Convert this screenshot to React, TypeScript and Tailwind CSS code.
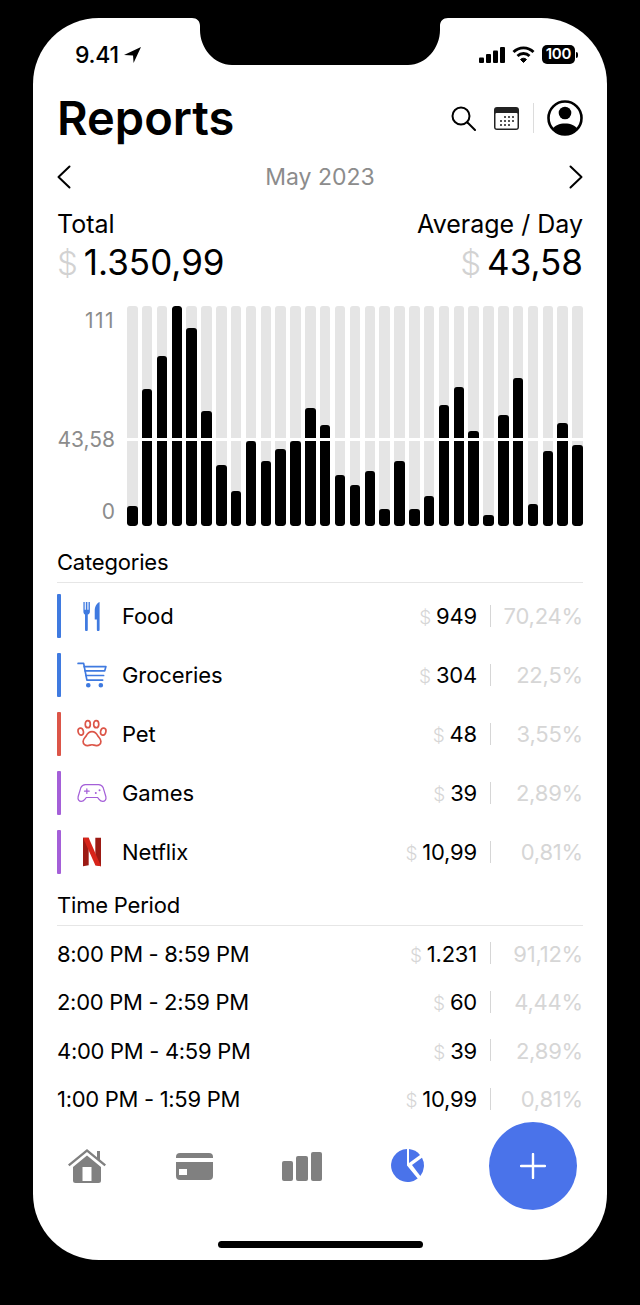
const bars = [20, 137, 170, 220, 198, 115, 61, 35, 85, 65, 77, 85, 118, 101, 51, 41, 55, 17, 65, 17, 30, 121, 139, 95, 11, 111, 148, 22, 75, 103, 81];

const categories = [
  { name: "Food", amount: "949", pct: "70,24%", color: "bg-[#3f7ae0]", icon: <FoodIcon /> },
  { name: "Groceries", amount: "304", pct: "22,5%", color: "bg-[#3f7ae0]", icon: <CartIcon /> },
  { name: "Pet", amount: "48", pct: "3,55%", color: "bg-[#dc5548]", icon: <PawIcon /> },
  { name: "Games", amount: "39", pct: "2,89%", color: "bg-[#a45fd8]", icon: <GameIcon /> },
  { name: "Netflix", amount: "10,99", pct: "0,81%", color: "bg-[#a45fd8]", icon: <NetflixIcon /> },
];

const periods = [
  { name: "8:00 PM - 8:59 PM", amount: "1.231", pct: "91,12%" },
  { name: "2:00 PM - 2:59 PM", amount: "60", pct: "4,44%" },
  { name: "4:00 PM - 4:59 PM", amount: "39", pct: "2,89%" },
  { name: "1:00 PM - 1:59 PM", amount: "10,99", pct: "0,81%" },
];

function FoodIcon() {
  return (
    <svg width="17" height="30" viewBox="0 0 21 31" preserveAspectRatio="none" className="text-[#3f7ae0]" fill="currentColor">
      <path d="M0.5 1h1.600v8h1.400V1h1.900v8h1.400V1h1.700v10c0 1.500-1 2.600-2.600 3v15.500a1.700 1.700 0 0 1-3.400 0V14C1.400 13.600.5 12.500.5 11z" />
      <path d="M20.500 1v28.500a1.700 1.700 0 0 1-3.400 0V19h-2.600V10c0-4 2.400-8 6-9z" />
    </svg>
  );
}

function CartIcon() {
  return (
    <svg width="30" height="26" viewBox="0 0 32 28" fill="none" stroke="#3f7ae0" strokeWidth="1.800" strokeLinecap="round" strokeLinejoin="round">
      <path d="M1 1.500h6l3.500 18h17" />
      <path d="M7.600 5h23.400l-1.300 4.500H8.500" />
      <path d="M9.500 14.500h19" />
      <circle cx="12" cy="25" r="1.600" fill="#3f7ae0" />
      <circle cx="25.500" cy="25" r="1.600" fill="#3f7ae0" />
    </svg>
  );
}

function PawIcon() {
  return (
    <svg width="30" height="29" viewBox="0 0 32 30" fill="none" stroke="#dc5548" strokeWidth="1.800">
      <ellipse cx="11.500" cy="5" rx="2.700" ry="3.800" />
      <ellipse cx="20.500" cy="5" rx="2.700" ry="3.800" />
      <ellipse cx="4" cy="13" rx="2.800" ry="3.800" transform="rotate(-12 4 13)" />
      <ellipse cx="28" cy="13" rx="2.800" ry="3.800" transform="rotate(12 28 13)" />
      <path d="M16 13c3 0 5 2 6.500 5 1 1.600 3 3 3 5.500 0 3-2.500 4.700-5 4.500-2-.2-3-1-4.500-1s-2.500.8-4.500 1c-2.500.2-5-1.500-5-4.500 0-2.500 2-3.900 3-5.500C11 15 13 13 16 13z" />
    </svg>
  );
}

function GameIcon() {
  return (
    <svg width="30" height="20" viewBox="0 0 32 21" fill="none" stroke="#a45fd8" strokeWidth="1.300" strokeLinecap="round">
      <path d="M9 1.500h14c2.500 0 4 1.200 5 3.500l2.800 9.500c.6 2.800-1 5-3.300 5-1.800 0-3-1-4.200-2.500l-1.300-1.700H9.900l-1.300 1.700C7.400 18.500 6.200 19.500 4.500 19.500c-2.300 0-3.900-2.200-3.300-5L4 5C5 2.700 6.500 1.500 9 1.500z" />
      <path d="M8 8.500h5M10.500 6v5" />
      <path d="M20 10.500h.1M24 7.500h.1" strokeWidth="2" />
    </svg>
  );
}

function NetflixIcon() {
  return (
    <svg width="18" height="30" viewBox="0 0 19 30">
      <polygon points="0,0 6,0 6,29 0,30" fill="#9c1a14" />
      <polygon points="13,0 19,0 19,30 13,29" fill="#9c1a14" />
      <polygon points="0,0 6,0 19,30 13,29" fill="#d8241a" />
    </svg>
  );
}

function Money({ value, big }: { value: string; big?: boolean }) {
  return (
    <span className="flex items-baseline">
      <span className={big ? "mr-[6px] text-[33px] font-light text-[#d2d2d2]" : "mr-[5px] text-[19px] font-light text-[#d6d6d6]"}>$</span>
      <span>{value}</span>
    </span>
  );
}

function Figures({ amount, pct }: { amount: string; pct: string }) {
  return (
    <div className="ml-auto flex items-center text-[22px] tracking-[-0.2px]">
      <span className="pt-[2px]"><Money value={amount} /></span>
      <div className="mr-[12px] ml-[13px] h-[22px] w-px bg-[#d6d6d6]" />
      <span className="w-[80px] pt-[2px] text-right text-[#d6d6d6]">{pct}</span>
    </div>
  );
}

export default function App() {
  return (
    <div className="h-[1305px] w-[640px] overflow-hidden bg-black pt-[18px] pl-[33px] text-black [font-family:Inter,'Noto_Sans',sans-serif]">
      <div className="relative flex h-[1242px] w-[574px] flex-col rounded-[66px] bg-white">
        {/* notch */}
        <svg className="absolute top-0 left-[159px]" width="256" height="47" viewBox="0 0 256 47" fill="#000">
          <path d="M0 0C5 0 8 3 8 8v4C8 30 22 47 40 47H216C234 47 248 30 248 12V8C248 3 251 0 256 0z" />
        </svg>

        {/* status bar */}
        <div className="flex h-[76px] items-start justify-between pt-[24px] pr-[29px] pl-[42px]">
          <div className="flex items-center gap-[5px] text-[23px] leading-[26px] font-medium tracking-[-0.3px]">
            9.41
            <svg width="17" height="16" viewBox="0 0 16 15" fill="currentColor">
              <path d="M16 0 9 15 8.500 8 0 7.500z" />
            </svg>
          </div>
          <div className="flex items-center gap-[7px] pt-[3px]">
            <svg width="26" height="16" viewBox="0 0 26 16" fill="currentColor">
              <rect x="0" y="10.500" width="5" height="5.500" rx="1" />
              <rect x="7" y="7" width="5" height="9" rx="1" />
              <rect x="14" y="3.500" width="5" height="12.500" rx="1" />
              <rect x="21" y="0" width="5" height="16" rx="1" />
            </svg>
            <svg width="23" height="17" viewBox="0 0 23 17" fill="none" stroke="currentColor" strokeWidth="2.800">
              <path d="M1.500 6a14 14 0 0 1 20 0" />
              <path d="M5.500 10a8.500 8.500 0 0 1 12 0" />
              <path d="M11.500 16.500 8.500 13.500a4.200 4.200 0 0 1 6 0z" fill="currentColor" strokeWidth="1" />
            </svg>
            <div className="flex items-center">
              <div className="flex h-[19px] w-[33px] items-center justify-center rounded-[5px] bg-black text-[15px] font-semibold tracking-[-0.2px] text-white">
                100
              </div>
              <div className="ml-px h-[6px] w-[2px] rounded-r-sm bg-black" />
            </div>
          </div>
        </div>

        <div className="flex flex-col px-[24px]">
          {/* title */}
          <div className="flex h-[50px] items-center justify-between">
            <h1 className="pb-[2px] text-[47px] leading-[48px] font-semibold">Reports</h1>
            <div className="flex items-center pb-[2px]">
              <svg width="25" height="25" viewBox="0 0 25 25" fill="none" stroke="currentColor" strokeWidth="2" strokeLinecap="round">
                <circle cx="10" cy="10" r="8.500" />
                <path d="M16.500 16.500 24 24" />
              </svg>
              <svg className="ml-[18px]" width="25" height="23" viewBox="0 0 25 23">
                <rect x="0" y="0" width="25" height="23" rx="3" fill="#222" />
                <rect x="1.500" y="6" width="22" height="15.500" rx="1" fill="#fff" />
                <g fill="#555">
                  <rect x="10" y="9" width="2" height="2" />
                  <rect x="14" y="9" width="2" height="2" />
                  <rect x="18" y="9" width="2" height="2" />
                  <rect x="6" y="13" width="2" height="2" />
                  <rect x="10" y="13" width="2" height="2" />
                  <rect x="14" y="13" width="2" height="2" />
                  <rect x="18" y="13" width="2" height="2" />
                  <rect x="6" y="17" width="2" height="2" />
                  <rect x="10" y="17" width="2" height="2" />
                  <rect x="14" y="17" width="2" height="2" />
                </g>
              </svg>
              <div className="mr-[13px] ml-[14px] h-[30px] w-px bg-[#dcdcdc]" />
              <svg width="36" height="36" viewBox="0 0 36 36">
                <circle cx="18" cy="18" r="16.500" fill="#fff" stroke="#000" strokeWidth="2.600" />
                <circle cx="18" cy="13" r="6.300" fill="#000" />
                <path d="M5.500 29c2-3.500 7-5.500 12.500-5.500S28.500 25.500 30.500 29a16.500 16.500 0 0 1-25 0z" fill="#000" />
              </svg>
            </div>
          </div>

          {/* month switcher */}
          <div className="flex h-[66px] items-center justify-between">
            <svg width="14" height="24" viewBox="0 0 14 24" fill="none" stroke="currentColor" strokeWidth="2" strokeLinecap="round" strokeLinejoin="round">
              <path d="M12.500 1.500 1.500 12l11 10.500" />
            </svg>
            <span className="text-[23px] text-[#8c8c8c]">May 2023</span>
            <svg width="14" height="24" viewBox="0 0 14 24" fill="none" stroke="currentColor" strokeWidth="2" strokeLinecap="round" strokeLinejoin="round">
              <path d="M1.500 1.500 12.500 12l-11 10.500" />
            </svg>
          </div>

          {/* totals */}
          <div className="flex justify-between">
            <div className="flex flex-col items-start">
              <span className="h-[28px] text-[25px] leading-[28px]">Total</span>
              <span className="h-[48px] text-[35px] leading-[48px]"><Money big value="1.350,99" /></span>
            </div>
            <div className="flex flex-col items-end">
              <span className="h-[28px] text-[25px] leading-[28px]">Average / Day</span>
              <span className="h-[48px] text-[35px] leading-[48px]"><Money big value="43,58" /></span>
            </div>
          </div>

          {/* chart */}
          <div className="mt-[20px] flex h-[220px]">
            <div className="relative w-[58px] text-right text-[21px] leading-[24px] text-[#8c8c8c]">
              <span className="absolute top-[3px] right-0 tracking-[1.5px]">111</span>
              <span className="absolute top-[122px] right-0">43,58</span>
              <span className="absolute top-[194px] right-0">0</span>
            </div>
            <div className="relative ml-[12px] flex flex-1 justify-between">
              {bars.map((h, i) => (
                <div key={i} className="relative h-full w-[10.500px] overflow-hidden rounded-[3px] bg-[#e5e5e5]">
                  <div className="absolute right-0 bottom-0 left-0 rounded-[3px] bg-black" style={{ height: `${h}px` }} />
                </div>
              ))}
              <div className="absolute top-[132px] right-0 left-0 h-[3px] bg-white" />
            </div>
          </div>

          {/* categories */}
          <div className="flex h-[57px] items-end border-b border-[#e6e6e6] pb-[8px] text-[22px] leading-[24px] tracking-[-0.2px]">Categories</div>
          <div className="flex flex-col pt-[3px]">
            {categories.map((c) => (
              <div key={c.name} className="flex h-[59px] items-center text-[22px]">
                <div className={`h-[44px] w-[4px] rounded-[1px] ${c.color}`} />
                <div className="flex w-[61px] justify-center">{c.icon}</div>
                <span className="pt-[2px] tracking-[-0.1px]">{c.name}</span>
                <Figures amount={c.amount} pct={c.pct} />
              </div>
            ))}
          </div>

          {/* time period */}
          <div className="flex h-[45px] items-end border-b border-[#e6e6e6] pb-[8px] text-[22px] leading-[24px] tracking-[-0.2px]">Time Period</div>
          <div className="flex h-[196px] flex-col pt-[3px]">
            {periods.map((p) => (
              <div key={p.name} className="flex h-[48.500px] shrink-0 items-center text-[22px]">
                <span className="pt-[2px] tracking-[-0.3px]">{p.name}</span>
                <Figures amount={p.amount} pct={p.pct} />
              </div>
            ))}
          </div>
        </div>

        {/* tab bar */}
        <div className="flex h-[88px] items-center pl-[35px]">
          <svg width="38" height="34" viewBox="0 0 38 34" fill="#808080">
            <path d="M19 0 0 15.500l1.500 1.800L19 3l17.500 14.300 1.500-1.800-6-4.900V2h-3v6.200z" />
            <path fillRule="evenodd" d="M19 6.500 5 18v13.500A2.500 2.500 0 0 0 7.500 34h23a2.500 2.500 0 0 0 2.500-2.500V18zM14.500 18h9v14h-9z" />
          </svg>
          <svg className="ml-[70px]" width="37" height="27" viewBox="0 0 37 27" fill="#808080">
            <path d="M4 0h29a4 4 0 0 1 4 4v1H0V4a4 4 0 0 1 4-4z" />
            <path fillRule="evenodd" d="M0 9h37v14a4 4 0 0 1-4 4H4a4 4 0 0 1-4-4zM3 16v6h8v-6z" />
          </svg>
          <div className="ml-[69px] flex h-[29px] w-[40px] items-end gap-[3px]">
            <div className="h-[20px] flex-1 rounded-[2px] bg-[#808080]" />
            <div className="h-[25px] flex-1 rounded-[2px] bg-[#808080]" />
            <div className="h-[29px] flex-1 rounded-[2px] bg-[#808080]" />
          </div>
          <svg className="mb-[1px] ml-[69px]" width="33" height="33" viewBox="0 0 33 33" fill="#4a73ea">
            <path d="M16 0V16.500L26.700 29.500A16.500 16.500 0 1 1 16 0z" />
            <path d="M18 .1A16.500 16.500 0 0 1 29 6L18 14z" />
            <path d="M21 16 31 8.700A16.500 16.500 0 0 1 29.300 26.900z" />
          </svg>
          <div className="ml-[65px] flex h-[88px] w-[88px] items-center justify-center rounded-full bg-[#4a73ea]">
            <svg width="26" height="26" viewBox="0 0 26 26" stroke="#fff" strokeWidth="2.400" strokeLinecap="round">
              <path d="M13 1v24M1 13h24" />
            </svg>
          </div>
        </div>

        {/* home indicator */}
        <div className="mt-[31px] h-[7px] w-[205px] self-center rounded-full bg-black" />
      </div>
    </div>
  );
}
